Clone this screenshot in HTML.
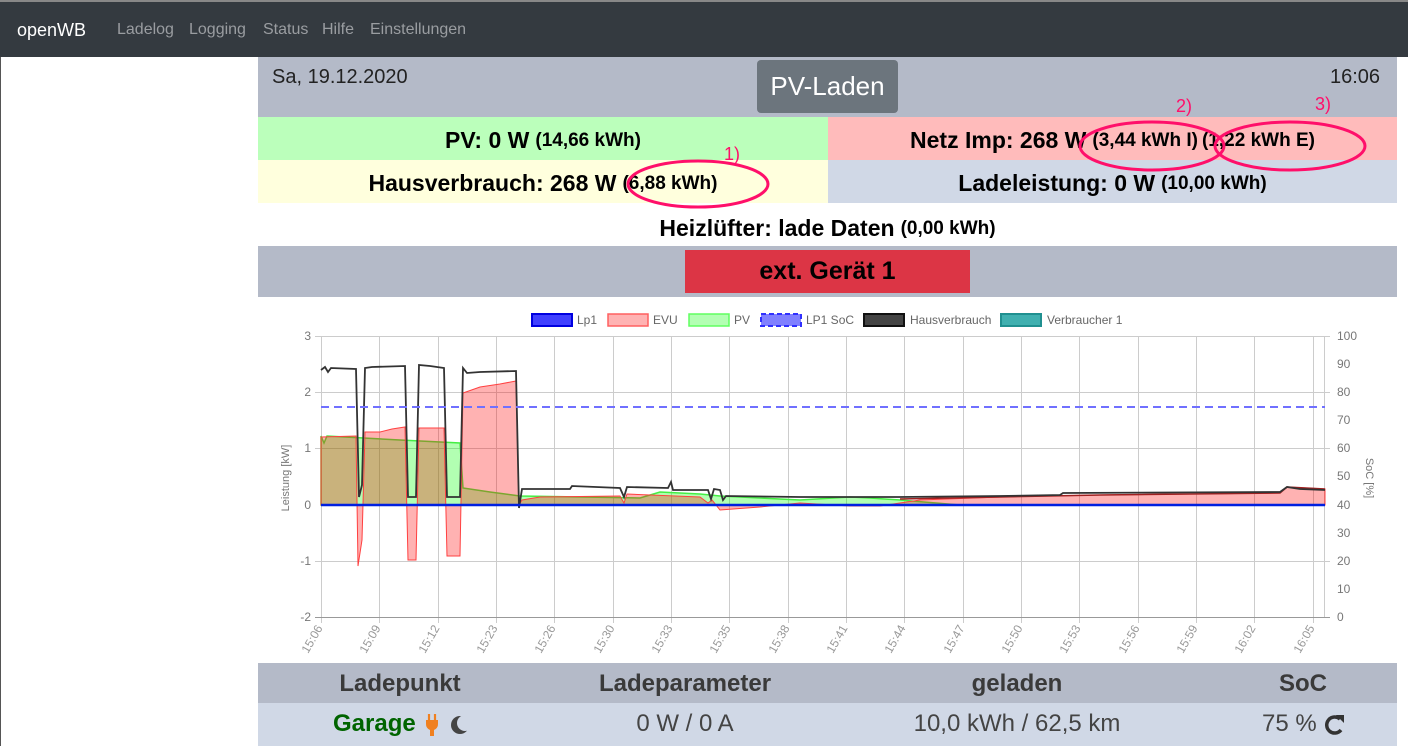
<!DOCTYPE html>
<html><head><meta charset="utf-8"><style>
*{margin:0;padding:0;box-sizing:border-box}
body{width:1408px;height:746px;overflow:hidden;background:#fff;font-family:"Liberation Sans",sans-serif;position:relative}
.nav{position:absolute;left:0;top:0;width:1408px;height:57px;background:#343a40;border-top:2px solid #888}
.nav span{position:absolute;top:19px;font-size:16px;color:#9a9da1}
.abs{position:absolute}
.row{position:absolute;display:flex;align-items:center;justify-content:center;font-weight:bold;font-size:23px;color:#000;white-space:nowrap}
.row small{font-size:19px;margin-left:6px}
</style></head><body>
<div class="nav">
<span style="left:17px;color:#fff;font-size:18px;top:18px">openWB</span>
<span style="left:117px">Ladelog</span>
<span style="left:189px">Logging</span>
<span style="left:263px">Status</span>
<span style="left:322px">Hilfe</span>
<span style="left:370px">Einstellungen</span>
</div>
<div class="abs" style="left:0;top:57px;width:1px;height:689px;background:#555"></div>
<div class="abs" style="left:258px;top:57px;width:1139px;height:60px;background:#b4bac8"></div>
<div class="abs" style="left:272px;top:66px;font-size:20px;color:#222">Sa, 19.12.2020</div>
<div class="abs" style="left:1330px;top:66px;font-size:20px;color:#222">16:06</div>
<div class="abs" style="left:757px;top:60px;width:141px;height:53px;background:#6c757d;border-radius:4px;color:#fff;font-size:26px;display:flex;align-items:center;justify-content:center">PV-Laden</div>
<div class="row" style="left:258px;top:119px;width:570px;height:43px;background:#bbffbb">PV: 0 W<small>(14,66 kWh)</small></div>
<div class="row" style="left:828px;top:119px;width:569px;height:43px;background:#ffbbbb">Netz Imp: 268 W<small>(3,44 kWh I)</small><small style="margin-left:4px">(1,22 kWh E)</small></div>
<div class="abs" style="left:258px;top:117px;width:1139px;height:2px;background:#bbffbb"></div>
<div class="abs" style="left:828px;top:117px;width:569px;height:2px;background:#ffbbbb"></div>
<div class="row" style="left:258px;top:160px;width:570px;height:43px;background:#ffffdd;padding-top:4px">Hausverbrauch: 268 W<small>(6,88 kWh)</small></div>
<div class="row" style="left:828px;top:160px;width:569px;height:43px;background:#d0d8e6;padding-top:4px">Ladeleistung: 0 W<small>(10,00 kWh)</small></div>
<div class="row" style="left:258px;top:207px;width:1139px;height:43px">Heizlüfter: lade Daten<small>(0,00 kWh)</small></div>
<div class="abs" style="left:258px;top:246px;width:1139px;height:51px;background:#b4bac8"></div>
<div class="row" style="left:685px;top:250px;width:285px;height:43px;background:#dc3545;font-size:25px">ext. Gerät 1</div>

<svg class="abs" style="left:0;top:0" width="1408" height="746">
<g fill="none" stroke="#ff0f6a" stroke-width="3">
<ellipse cx="698" cy="184" rx="70" ry="23"/>
<ellipse cx="1152" cy="146" rx="72" ry="24"/>
<ellipse cx="1290" cy="146" rx="75" ry="24"/>
</g>
<g fill="#ff0f6a" font-size="18" font-family="Liberation Sans">
<text x="724" y="160">1)</text><text x="1176" y="112">2)</text><text x="1315" y="110">3)</text>
</g>
<g font-size="12" fill="#666" font-family="Liberation Sans">
<rect x="532" y="314" width="40" height="12" fill="#4040ff" stroke="#0000e0" stroke-width="2"/><text x="577" y="324">Lp1</text>
<rect x="608" y="314" width="40" height="12" fill="#ffb3b3" stroke="#ff6060" stroke-width="1.5"/><text x="653" y="324">EVU</text>
<rect x="689" y="314" width="40" height="12" fill="#b3ffb3" stroke="#60ff60" stroke-width="1.5"/><text x="734" y="324">PV</text>
<rect x="761" y="314" width="40" height="12" fill="#8080ff" stroke="#3030ff" stroke-width="2" stroke-dasharray="5,3"/><text x="806" y="324">LP1 SoC</text>
<rect x="864" y="314" width="40" height="12" fill="#444" stroke="#111" stroke-width="2"/><text x="910" y="324">Hausverbrauch</text>
<rect x="1001" y="314" width="40" height="12" fill="#40b0b0" stroke="#209090" stroke-width="2"/><text x="1047" y="324">Verbraucher 1</text>
</g>
<g stroke="#ccc" stroke-width="1">
<line x1="315" y1="336.5" x2="1330" y2="336.5"/><line x1="315" y1="392.5" x2="1330" y2="392.5"/><line x1="315" y1="448.5" x2="1330" y2="448.5"/><line x1="315" y1="561.5" x2="1330" y2="561.5"/><line x1="315" y1="617.5" x2="1330" y2="617.5"/>
<line x1="321.5" y1="336" x2="321.5" y2="623"/><line x1="379.5" y1="336" x2="379.5" y2="623"/><line x1="438.5" y1="336" x2="438.5" y2="623"/><line x1="496.5" y1="336" x2="496.5" y2="623"/><line x1="554.5" y1="336" x2="554.5" y2="623"/><line x1="613.5" y1="336" x2="613.5" y2="623"/><line x1="671.5" y1="336" x2="671.5" y2="623"/><line x1="729.5" y1="336" x2="729.5" y2="623"/><line x1="788.5" y1="336" x2="788.5" y2="623"/><line x1="846.5" y1="336" x2="846.5" y2="623"/><line x1="904.5" y1="336" x2="904.5" y2="623"/><line x1="963.5" y1="336" x2="963.5" y2="623"/><line x1="1021.5" y1="336" x2="1021.5" y2="623"/><line x1="1079.5" y1="336" x2="1079.5" y2="623"/><line x1="1138.5" y1="336" x2="1138.5" y2="623"/><line x1="1196.5" y1="336" x2="1196.5" y2="623"/><line x1="1254.5" y1="336" x2="1254.5" y2="623"/><line x1="1313.5" y1="336" x2="1313.5" y2="623"/><line x1="1324.5" y1="336" x2="1324.5" y2="617"/>
</g>
<line x1="315" y1="617.5" x2="1330" y2="617.5" stroke="#999"/>
<path d="M321,505 L321,436 L324,443 L327,436 L345,437 L400,440 L460,443 L463,488 L490,492 L520,496 L640,498 L660,492 L700,494 L720,496 L760,498 L800,500 L850,497 L870,498 L900,500 L960,505 L1325,505 Z" fill="rgba(0,255,0,0.3)" stroke="#44ee44" stroke-width="1.5"/>
<path d="M321,505 L321,437 L356,436 L358,566 L362,540 L365,432 L380,432 L392,429 L405,427 L408,560 L416,560 L419,428 L444,428 L447,556 L460,556 L463,393 L480,387 L500,384 L516,381 L519,505 L522,500 L540,497 L620,496 L624,503 L627,494 L700,497 L708,503 L712,500 L720,510 L760,507 L800,503 L850,506 L880,506 L920,500 L1000,497 L1100,495 L1280,493 L1287,487 L1325,489 L1325,505 Z" fill="rgba(255,0,0,0.3)" stroke="#ff4040" stroke-width="1"/>
<path d="M900,499 L1000,497 L1100,495 L1280,493 L1287,487 L1325,489" fill="none" stroke="#a02020" stroke-width="1.5"/>
<path d="M321,370 L325,367 L328,372 L331,368 L356,369 L359,497 L362,485 L365,368 L372,367 L405,366 L408,497 L416,497 L419,365 L430,366 L444,368 L447,497 L460,497 L463,368 L467,373 L480,372 L516,371 L519,508 L522,489 L570,489 L572,486 L620,488 L624,497 L627,487 L668,488 L671,482 L673,490 L708,490 L711,499 L714,489 L720,490 L723,500 L726,496 L800,497 L900,497 L1000,496 L1060,495 L1063,493 L1280,492 L1287,487 L1300,489 L1325,490" fill="none" stroke="#333" stroke-width="1.8"/>
<line x1="321" y1="407" x2="1325" y2="407" stroke="#7070ff" stroke-width="2" stroke-dasharray="8,5"/>
<line x1="321" y1="505" x2="1325" y2="505" stroke="#0020e0" stroke-width="2.5"/>
<g font-size="12" fill="#777" font-family="Liberation Sans" text-anchor="end">
<text x="311" y="340">3</text><text x="311" y="396">2</text><text x="311" y="452">1</text><text x="311" y="509">0</text><text x="311" y="565">-1</text><text x="311" y="621">-2</text>
</g>
<g font-size="12" fill="#777" font-family="Liberation Sans">
<text x="1337" y="340">100</text><text x="1337" y="368">90</text><text x="1337" y="396">80</text><text x="1337" y="424">70</text><text x="1337" y="452">60</text><text x="1337" y="480">50</text><text x="1337" y="509">40</text><text x="1337" y="537">30</text><text x="1337" y="565">20</text><text x="1337" y="593">10</text><text x="1337" y="621">0</text>
<text transform="translate(289,478) rotate(-90)" text-anchor="middle" font-size="11">Leistung [kW]</text>
<text transform="translate(1366,478) rotate(90)" text-anchor="middle" font-size="11">SoC [%]</text>
</g>
<g font-size="12" fill="#999" font-family="Liberation Sans" text-anchor="end">
<text transform="translate(323,628) rotate(-60)">15:06</text>
<text transform="translate(381,628) rotate(-60)">15:09</text>
<text transform="translate(440,628) rotate(-60)">15:12</text>
<text transform="translate(498,628) rotate(-60)">15:23</text>
<text transform="translate(556,628) rotate(-60)">15:26</text>
<text transform="translate(615,628) rotate(-60)">15:30</text>
<text transform="translate(673,628) rotate(-60)">15:33</text>
<text transform="translate(731,628) rotate(-60)">15:35</text>
<text transform="translate(790,628) rotate(-60)">15:38</text>
<text transform="translate(848,628) rotate(-60)">15:41</text>
<text transform="translate(906,628) rotate(-60)">15:44</text>
<text transform="translate(965,628) rotate(-60)">15:47</text>
<text transform="translate(1023,628) rotate(-60)">15:50</text>
<text transform="translate(1081,628) rotate(-60)">15:53</text>
<text transform="translate(1140,628) rotate(-60)">15:56</text>
<text transform="translate(1198,628) rotate(-60)">15:59</text>
<text transform="translate(1256,628) rotate(-60)">16:02</text>
<text transform="translate(1315,628) rotate(-60)">16:05</text>
</g>
</svg>

<div class="abs" style="left:258px;top:663px;width:1139px;height:40px;background:#b4bac8"></div>
<div class="abs" style="left:258px;top:703px;width:1139px;height:43px;background:#d0d8e6"></div>
<div class="abs" style="top:670px;left:300px;width:200px;text-align:center;font-size:24px;font-weight:bold;color:#3a3a3a">Ladepunkt</div>
<div class="abs" style="top:670px;left:535px;width:300px;text-align:center;font-size:24px;font-weight:bold;color:#3a3a3a">Ladeparameter</div>
<div class="abs" style="top:670px;left:867px;width:300px;text-align:center;font-size:24px;font-weight:bold;color:#3a3a3a">geladen</div>
<div class="abs" style="top:670px;left:1253px;width:100px;text-align:center;font-size:24px;font-weight:bold;color:#3a3a3a">SoC</div>
<div class="abs" style="top:710px;left:333px;font-size:24px;font-weight:bold;color:#006400;white-space:nowrap">Garage</div>
<svg class="abs" style="left:424px;top:712px" width="46" height="26">
<path d="M5,2 v6 M11,2 v6" stroke="#f08020" stroke-width="2.2"/>
<path d="M2,8 h12 v4 a6,6 0 0 1 -4,6 v6 h-4 v-6 a6,6 0 0 1 -4,-6 z" fill="#f08020"/>
<circle cx="36" cy="13" r="9" fill="#444"/>
<circle cx="41" cy="11" r="8" fill="#d0d8e6"/>
</svg>
<div class="abs" style="top:710px;left:535px;width:300px;text-align:center;font-size:24px;color:#444">0 W / 0 A</div>
<div class="abs" style="top:710px;left:867px;width:300px;text-align:center;font-size:24px;color:#444">10,0 kWh / 62,5 km</div>
<div class="abs" style="top:710px;left:1262px;font-size:24px;color:#444;white-space:nowrap">75 %</div>
<svg class="abs" style="left:1324px;top:713px" width="22" height="24">
<path d="M16,6 A8,8 0 1 0 17,17" fill="none" stroke="#333" stroke-width="3.5"/>
<path d="M12,2 L20,2 L20,10 Z" fill="#333"/>
</svg>
</body></html>
